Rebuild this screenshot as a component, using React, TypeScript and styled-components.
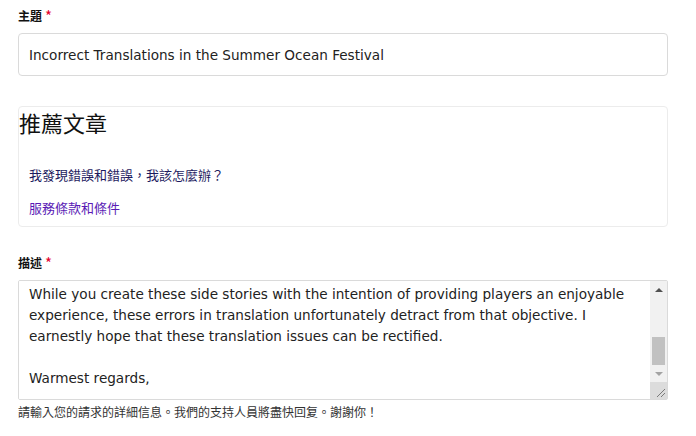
import React, { useEffect, useRef } from 'react';
import styled, { createGlobalStyle } from 'styled-components';

const GlobalStyle = createGlobalStyle`
  body {
    margin: 0;
    background: #fff;
    font-family: "Noto Sans", "Noto Sans CJK TC", sans-serif;
    color: #222;
  }
`;

const Form = styled.form`
  width: 650px;
  padding: 8px 0 0 18px;
  display: flex;
  flex-direction: column;
`;

const Label = styled.label`
  display: flex;
  align-items: center;
  gap: 3px;
  font-family: "Noto Sans CJK TC", sans-serif;
  font-size: 12px;
  font-weight: 700;
  line-height: 16px;
  color: #111;
  margin-bottom: 9px;
`;

const Required = styled.span`
  color: #e4002b;
  font-weight: 400;
  font-size: 15px;
`;

const TextInput = styled.input`
  box-sizing: border-box;
  height: 43px;
  width: 100%;
  border: 1px solid #dadada;
  border-radius: 4px;
  padding: 0 10px;
  font-family: "DejaVu Sans", sans-serif;
  font-size: 13.6px;
  color: #222;
  outline: none;
`;

const Card = styled.section`
  box-sizing: border-box;
  margin-top: 30px;
  height: 121px;
  border: 1px solid #ececec;
  border-radius: 4px;
  display: flex;
  flex-direction: column;
`;

const CardTitle = styled.h3`
  margin: 1px 0 0;
  font-family: "Noto Sans CJK TC", sans-serif;
  font-size: 22px;
  font-weight: 400;
  line-height: 28px;
  color: #111;
`;

const ArticleList = styled.ul`
  list-style: none;
  margin: 27px 0 0;
  padding: 0 0 0 10px;
  display: flex;
  flex-direction: column;
  gap: 11px;
`;

const ArticleLink = styled.a<{ $visited?: boolean }>`
  font-family: "Noto Sans CJK TC", sans-serif;
  font-size: 13px;
  line-height: 20px;
  text-decoration: none;
  color: ${(p) => (p.$visited ? '#5a1bb5' : '#1d1a5e')};
`;

const Spacer = styled.div`
  height: 28px;
`;

const AreaWrap = styled.div`
  position: relative;
  height: 120px;
`;

const TextArea = styled.textarea`
  box-sizing: border-box;
  display: block;
  width: 100%;
  height: 100%;
  border: 1px solid #dadada;
  border-radius: 2px;
  padding: 6px 27px 10px 10px;
  font-family: "DejaVu Sans", sans-serif;
  font-size: 13.6px;
  line-height: 21px;
  color: #222;
  outline: none;
  resize: none;
  overflow-y: scroll;
  scrollbar-width: none;
`;

/* drawn scrollbar laid over the textarea's right edge */
const ScrollBar = styled.div`
  position: absolute;
  top: 1px;
  right: 1px;
  bottom: 1px;
  width: 17px;
  display: flex;
  flex-direction: column;
  background: #f1f1f1;
  pointer-events: none;
`;

const ArrowButton = styled.div<{ $down?: boolean }>`
  height: 17px;
  flex: none;
  display: flex;
  align-items: center;
  justify-content: center;

  &::after {
    content: '';
    width: 0;
    height: 0;
    border-left: 4px solid transparent;
    border-right: 4px solid transparent;
    ${(p) =>
      p.$down
        ? 'border-top: 4px solid #a3a3a3;'
        : 'border-bottom: 4px solid #505050;'}
  }
`;

const Track = styled.div`
  flex: 1;
  display: flex;
  flex-direction: column;
  justify-content: flex-end;
  padding: 0 2px;
`;

const Thumb = styled.div`
  height: 28px;
  background: #c1c1c1;
`;

const Corner = styled.div`
  height: 17px;
  flex: none;
  background: #dcdcdc;
  display: flex;
  align-items: flex-end;
  justify-content: flex-end;
`;

const Help = styled.p`
  margin: 4px 0 0;
  font-family: "Noto Sans CJK TC", sans-serif;
  font-size: 12px;
  line-height: 16px;
  color: #333;
`;

const letter = `Dear Development Team,

I hope this message finds you well. I am writing to report several issues I have found in the Summer Ocean Festival event. Many of the character lines and item descriptions appear to be translated incorrectly, and some of the names do not match the ones used in the main story.

While you create these side stories with the intention of providing players an enjoyable experience, these errors in translation unfortunately detract from that objective. I earnestly hope that these translation issues can be rectified.

Warmest regards,`;

export default function App() {
  const areaRef = useRef<HTMLTextAreaElement>(null);

  useEffect(() => {
    const el = areaRef.current;
    if (el) el.scrollTop = el.scrollHeight;
  }, []);

  return (
    <>
      <GlobalStyle />
      <Form>
        <Label>
          主題<Required>*</Required>
        </Label>
        <TextInput defaultValue="Incorrect Translations in the Summer Ocean Festival" />

        <Card>
          <CardTitle>推薦文章</CardTitle>
          <ArticleList>
            <li>
              <ArticleLink href="#">我發現錯誤和錯誤，我該怎麼辦？</ArticleLink>
            </li>
            <li>
              <ArticleLink href="#" $visited>
                服務條款和條件
              </ArticleLink>
            </li>
          </ArticleList>
        </Card>

        <Spacer />
        <Label>
          描述<Required>*</Required>
        </Label>
        <AreaWrap>
          <TextArea ref={areaRef} defaultValue={letter} />
          <ScrollBar>
            <ArrowButton />
            <Track>
              <Thumb />
            </Track>
            <ArrowButton $down />
            <Corner>
              <svg width="17" height="17" viewBox="0 0 17 17">
                <path d="M15 7 L7 15 M15 11 L11 15" stroke="#7a7a7a" strokeWidth="1" />
              </svg>
            </Corner>
          </ScrollBar>
        </AreaWrap>
        <Help>請輸入您的請求的詳細信息。我們的支持人員將盡快回复。謝謝你！</Help>
      </Form>
    </>
  );
}
